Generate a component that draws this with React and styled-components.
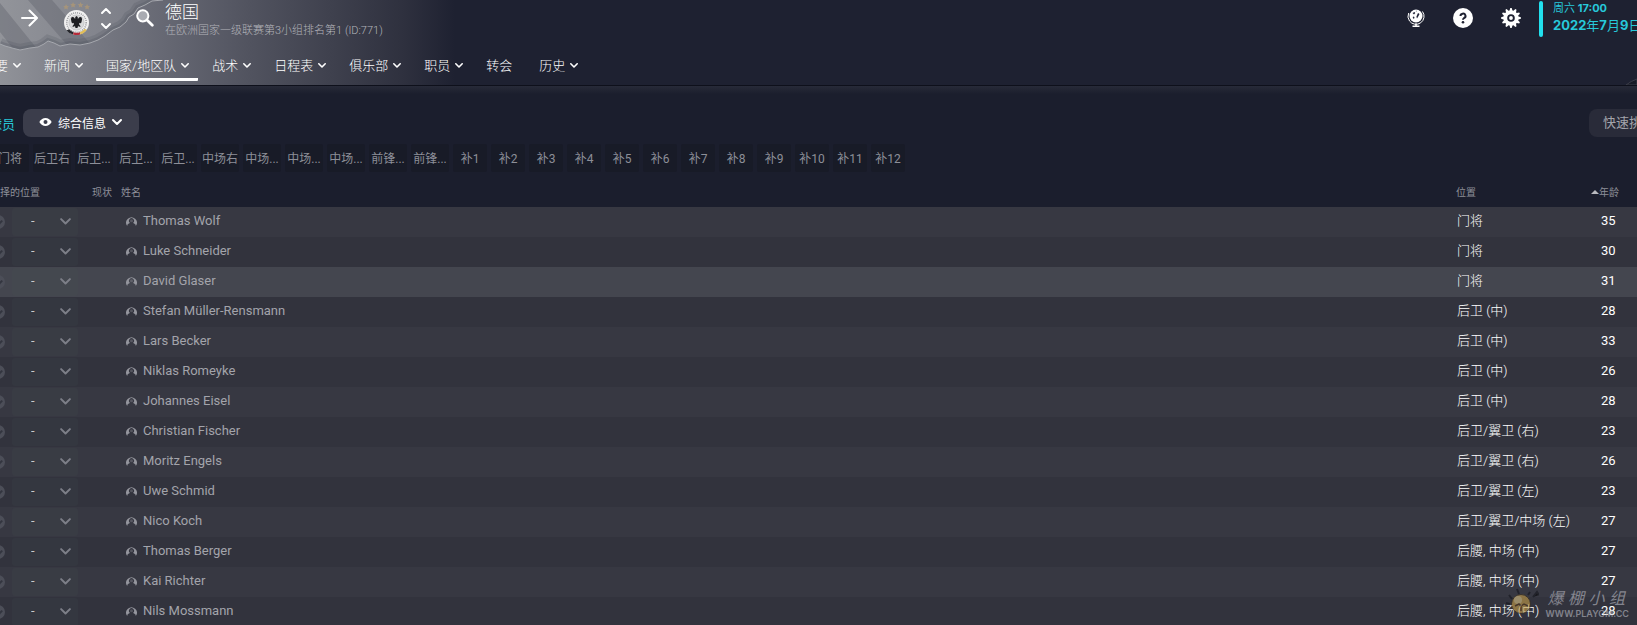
import React, { Component } from 'react'
import styled, { createGlobalStyle } from 'styled-components'

const colors = {
  page: '#1b1e2d',
  header: '#1e2131',
  accent: '#27c8da',
  accentBright: '#22e0ee',
  white: '#fff',
  muted: '#a3a4ab',
  dim: '#8d8f98',
  button: '#3b3d4b',
  rowOdd: '#373842',
  rowEven: '#32333d',
  rowActive: '#44464f'
}

const navItems = [
  { label: '概要', menu: true },
  { label: '新闻', menu: true },
  { label: '国家/地区队', menu: true, active: true },
  { label: '战术', menu: true },
  { label: '日程表', menu: true },
  { label: '俱乐部', menu: true },
  { label: '职员', menu: true },
  { label: '转会' },
  { label: '历史', menu: true }
]

const slots = [
  '门将',
  '后卫右',
  '后卫...',
  '后卫...',
  '后卫...',
  '中场右',
  '中场...',
  '中场...',
  '中场...',
  '前锋...',
  '前锋...'
]

const subs = ['1', '2', '3', '4', '5', '6', '7', '8', '9', '10', '11', '12']

const players = [
  { name: 'Thomas Wolf', position: '门将', age: 35 },
  { name: 'Luke Schneider', position: '门将', age: 30 },
  { name: 'David Glaser', position: '门将', age: 31, active: true },
  { name: 'Stefan Müller-Rensmann', position: '后卫 (中)', age: 28 },
  { name: 'Lars Becker', position: '后卫 (中)', age: 33 },
  { name: 'Niklas Romeyke', position: '后卫 (中)', age: 26 },
  { name: 'Johannes Eisel', position: '后卫 (中)', age: 28 },
  { name: 'Christian Fischer', position: '后卫/翼卫 (右)', age: 23 },
  { name: 'Moritz Engels', position: '后卫/翼卫 (右)', age: 26 },
  { name: 'Uwe Schmid', position: '后卫/翼卫 (左)', age: 23 },
  { name: 'Nico Koch', position: '后卫/翼卫/中场 (左)', age: 27 },
  { name: 'Thomas Berger', position: '后腰, 中场 (中)', age: 27 },
  { name: 'Kai Richter', position: '后腰, 中场 (中)', age: 27 },
  { name: 'Nils Mossmann', position: '后腰, 中场 (中)', age: 28 }
]

const GlobalStyle = createGlobalStyle`
  * { box-sizing: border-box; }
  body {
    margin: 0;
    background: ${colors.page};
    color: ${colors.white};
    font-family: Roboto, 'Noto Sans CJK SC', sans-serif;
    font-size: 13px;
  }
  button, select, input { font: inherit; color: inherit; }
  svg { display: block; flex: none; }
`

const Page = styled.div`
  position: relative;
  height: 100vh;
  overflow: hidden;
`
const HeaderBar = styled.header`
  position: relative;
  isolation: isolate;
  border-bottom: 1px solid #0e101b;
  background: linear-gradient(
    90deg,
    #919399 0,
    #7f818a 60px,
    #666873 165px,
    #51535f 250px,
    #3f414e 330px,
    #2e303e 405px,
    ${colors.header} 455px
  );
`
const Torn = styled.svg`
  position: absolute;
  top: 0;
  left: 0;
  z-index: -1;
`
const Corner = styled.svg`
  position: absolute;
  right: 0;
  bottom: 0;
`
const TopRow = styled.div`
  display: flex;
  align-items: center;
  height: 36px;
  margin-bottom: 14px;
  padding-left: 20px;
`
const IconButton = styled.button`
  display: flex;
  flex-direction: column;
  align-items: center;
  gap: ${props => props.$gap || 0}px;
  width: ${props => props.$width}px;
  margin: 0;
  padding: 0;
  border: 0;
  background: none;
  cursor: pointer;
`
const CrestLink = styled.a`
  margin: 0 10px 0 25px;
`
const SearchButton = styled(IconButton)`
  margin: 0 11px 0 24px;
`
const Heading = styled.div`
  align-self: flex-start;
  flex: 1;
  padding-top: 1px;
  font-weight: 300;
  white-space: nowrap;
`
const Title = styled.h1`
  margin: 0;
  font-size: 17px;
  font-weight: 300;
  line-height: 22px;
`
const Subtitle = styled.p`
  margin: 0;
  color: #b2b3b9;
  font-size: 11px;
  line-height: 16px;
`
const Tools = styled.div`
  display: flex;
  gap: 28px;
  margin-right: 18px;
`
const Clock = styled.div`
  align-self: flex-start;
  flex: none;
  width: 98px;
  margin-top: 1px;
  padding-left: 14px;
  overflow: hidden;
  position: relative;
  color: ${colors.accent};
  white-space: nowrap;
  &::before {
    content: '';
    position: absolute;
    inset: 0 auto 0 0;
    width: 4px;
    border-radius: 2px;
    background: ${colors.accentBright};
  }
  b {
    font-family: Inter, sans-serif;
    font-weight: 700;
  }
`
const Time = styled.div`
  font-size: 11px;
  line-height: 14px;
`
const Today = styled.div`
  font-size: 13px;
  line-height: 18px;
  padding-bottom: 2px;
`
const Nav = styled.nav`
  display: flex;
  gap: 4px;
  height: 35px;
  margin-left: -28px;
`
const NavLink = styled.a`
  display: flex;
  align-items: center;
  gap: 5px;
  height: 31px;
  padding: 0 ${props => (props.$menu ? 9 : 13)}px 0 10px;
  border-bottom: 3px solid ${props => (props.$active ? colors.white : 'transparent')};
  border-radius: 1px;
  color: ${colors.white};
  font-weight: 300;
  text-decoration: none;
  white-space: nowrap;
  svg {
    margin-top: 3px;
  }
`
const Toolbar = styled.div`
  display: flex;
  align-items: center;
  margin-left: -12px;
  padding-top: 23px;
  background: linear-gradient(#272a38, ${colors.page} 8px);
`
const SectionLabel = styled.span`
  width: 35px;
  padding-left: 1px;
  color: ${colors.accent};
`
const ViewButton = styled.button`
  display: flex;
  align-items: center;
  gap: 6px;
  height: 28px;
  padding: 0 17px 2px 16px;
  border: 0;
  border-radius: 8px;
  background: ${colors.button};
  font-size: 12px;
`
const QuickPick = styled.button`
  width: 48px;
  height: 28px;
  margin-left: auto;
  padding: 0 0 4px 14px;
  overflow: hidden;
  border: 0;
  border-radius: 8px 0 0 8px;
  background: #292b39;
  color: ${colors.muted};
  text-align: left;
  white-space: nowrap;
`
const Slots = styled.div`
  display: flex;
  gap: 4px;
  margin: 7px 0 0 -9px;
`
const Slot = styled.button`
  width: ${props => (props.$small ? 34 : 38)}px;
  height: 28px;
  padding: 0 0 2px;
  border: 0;
  border-radius: 2px;
  background: #181b27;
  color: ${colors.dim};
  font-size: 12px;
  white-space: nowrap;
`
const Table = styled.table`
  width: 100%;
  border-collapse: collapse;
  table-layout: fixed;
  white-space: nowrap;
`
const HeadCell = styled.th`
  width: ${props => (props.$width ? props.$width + 'px' : 'auto')};
  height: 35px;
  padding: 3px 0 0 ${props => props.$indent || 0}px;
  color: ${colors.dim};
  font-size: 10px;
  font-weight: 400;
  text-align: left;
`
const SelectionHead = styled.span`
  display: block;
  margin-left: -10px;
`
const SortMark = styled.span`
  display: inline-block;
  border: solid transparent;
  border-width: 0 4px 4px;
  border-bottom-color: #b9bac0;
  vertical-align: 2px;
`
const background = ({ $active, $odd }) => {
  if ($active) return colors.rowActive
  return $odd ? colors.rowOdd : colors.rowEven
}
const Row = styled.tr`
  height: 30px;
  background: ${background};
`
const Cell = styled.td`
  padding: 0 0 2px ${props => props.$indent || 0}px;
  line-height: 20px;
`
const PositionCell = styled(Cell)`
  padding-bottom: 3px;
  font-weight: 300;
`
const PickerCell = styled.td`
  padding: 0;
`
const Picker = styled.div`
  display: flex;
  align-items: center;
  gap: 7px;
  margin-left: -9px;
`
const Tick = styled.input`
  display: grid;
  place-items: center;
  appearance: none;
  width: 14px;
  height: 14px;
  margin: 0;
  border-radius: 50%;
  background: #4c4e58;
  &::after {
    content: '';
    width: 6px;
    height: 4px;
    border: solid #33353f;
    border-width: 0 0 2px 2px;
    transform: rotate(-45deg);
  }
`
const SelectBox = styled.div`
  display: grid;
  align-items: center;
  width: 66px;
  height: 28px;
  border-radius: 3px;
  background: rgba(70, 84, 84, 0.14);
  color: #7d7f88;
  > * {
    grid-area: 1 / 1;
  }
  svg {
    justify-self: end;
    margin: 0 7px 1px 0;
    pointer-events: none;
  }
`
const PositionSelect = styled.select`
  appearance: none;
  width: 100%;
  height: 28px;
  padding: 0 0 3px 19px;
  border: 0;
  background: none;
  color: #c8c9cd;
`
const Player = styled.a`
  display: flex;
  align-items: center;
  gap: 6px;
  color: ${colors.muted};
  text-decoration: none;
`
const Watermark = styled.div`
  position: absolute;
  right: 8px;
  bottom: 6px;
  display: flex;
  align-items: center;
  gap: 6px;
  opacity: 0.6;
  pointer-events: none;
`
const WatermarkText = styled.div`
  color: #b9bac2;
  font-size: 9px;
  font-family: Inter, 'Noto Sans CJK SC', sans-serif;
  font-weight: 600;
  line-height: 10px;
`
const WatermarkName = styled.div`
  display: flex;
  justify-content: space-between;
  padding: 0 4px 0 2px;
  font-size: 16px;
  font-style: italic;
  font-weight: 400;
  line-height: 22px;
`

const Chevron = ({ size = 8, weight = 1.6, up }) => (
  <svg width={size} height={size * 0.6} viewBox="0 0 10 6" fill="none" stroke="currentColor" strokeWidth={weight * 10 / size} strokeLinecap="round" strokeLinejoin="round" overflow="visible">
    <path d={up ? 'M1 5l4-4 4 4' : 'M1 1l4 4 4-4'} />
  </svg>
)

const ArrowIcon = () => (
  <svg width="18" height="18" viewBox="0 0 18 18" fill="none" stroke="#fff" strokeWidth="2" strokeLinecap="round" strokeLinejoin="round">
    <path d="M2 9h14.500M9.500 1.500l7.500 7.500-7.500 7.500" />
  </svg>
)

const SearchIcon = () => (
  <svg width="18" height="18" viewBox="0 0 18 18" fill="none" stroke="#fff" strokeLinecap="round">
    <circle cx="6.800" cy="6.800" r="5.600" fill="#a9abb2" strokeWidth="2" />
    <path d="M11.500 11.500l4.800 4.800" strokeWidth="2.800" />
  </svg>
)

const Crest = () => (
  <svg width="27" height="36" viewBox="0 0 27 36">
    <g fill="#b49a72" opacity=".7">
      <path d="M3 4l1 2 2 .3-1.500 1.300.4 2L3 8.600 1.200 9.600l.4-2L.2 6.300l2-.3z" />
      <path d="M10 2l1 2 2 .3-1.500 1.300.4 2L10 6.600 8.200 7.600l.4-2L7.200 4.300l2-.3z" />
      <path d="M17.500 2l1 2 2 .3L19 5.600l.4 2-1.900-1-1.800 1 .4-2-1.400-1.300 2-.3z" />
      <path d="M24 4l1 2 2 .3-1.500 1.300.4 2L24 8.600l-1.800 1 .4-2-1.400-1.300 2-.3z" />
    </g>
    <circle cx="13.500" cy="22.500" r="12.500" fill="#f1f1f1" />
    <circle cx="13.500" cy="22.500" r="9.700" fill="none" stroke="#9c9da1" strokeWidth="1.500" strokeDasharray="1 1" />
    <circle cx="13.500" cy="22.500" r="7.600" fill="#d9dadb" stroke="#b4b5b8" strokeWidth=".6" />
    <path d="M3.500 30.500a12.500 12.500 0 0 0 6.500 4l.6-2.300a10 10 0 0 1-4.600-3z" fill="#26272c" />
    <path d="M10 34.500a12.500 12.500 0 0 0 7.500 0l-.6-2.300a10 10 0 0 1-6.300 0z" fill="#b72c3a" />
    <path d="M17.500 34.500a12.500 12.500 0 0 0 6.300-4.500l-2.100-1.300a10 10 0 0 1-4.800 3.500z" fill="#e0bd57" />
    <path d="M13.500 16l1.200 1 .2 2 1.300-1.700 2-.3.900 2-.7 3.500-1.400 1-1-.8.200 1.800 1.600 2-1.900.2-.8-.9-.6 2.200h-2l-.6-2.200-.8.900-1.900-.2 1.600-2 .2-1.800-1 .8-1.400-1-.7-3.500.9-2 2 .3 1.300 1.700.2-2z" fill="#1d1e22" />
  </svg>
)

const GlobeIcon = () => (
  <svg width="20" height="20" viewBox="0 0 20 20">
    <circle cx="11" cy="8" r="6.500" fill="#fff" />
    <path d="M7.500 5l2-1 .8 1-1.300 1.500zM8 8.500l1.500.5-.5 2-1.200-1zM13 5l1.500 1-1 2-1.500 2.500-.6-1.800.6-1.500zM10.500 3l1.300-.3.300.8z" fill="#23263a" />
    <path d="M17.500 3.500a8 8 0 0 1-13 9.500M3.700 5a8 8 0 0 0 .8 8" fill="none" stroke="#fff" />
    <path d="M11 15.500v2M7.500 18.200h7" stroke="#fff" strokeWidth="1.600" />
  </svg>
)

const HelpIcon = () => (
  <svg width="20" height="20" viewBox="0 0 20 20" fill="none">
    <circle cx="10" cy="10" r="10" fill="#fff" />
    <path d="M7.500 8a2.500 2.300 0 1 1 3.600 2c-.8.500-1.100.8-1.100 1.700" stroke="#1e2131" strokeWidth="2" />
    <circle cx="10" cy="14.200" r="1.300" fill="#1e2131" />
  </svg>
)

// twelve teeth: each one is two outer and two inner points
const gearPoints = Array.from({ length: 48 }, (_, i) => {
  const tooth = i % 4
  const radius = tooth < 2 ? 10.4 : 8
  const angle = (Math.floor(i / 4) * 30 + [-4, 4, 11, 19][tooth] - 90) * Math.PI / 180
  return `${(10 + radius * Math.cos(angle)).toFixed(2)},${(10 + radius * Math.sin(angle)).toFixed(2)}`
}).join(' ')

const GearIcon = () => (
  <svg width="20" height="20" viewBox="-0.500 -0.500 21 21">
    <polygon points={gearPoints} fill="#fff" />
    <circle cx="10" cy="10" r="3" fill="#fff" stroke="#1e2131" strokeWidth="2" />
  </svg>
)

const EyeIcon = () => (
  <svg width="13" height="10" viewBox="0 0 13 10">
    <path d="M.3 5C2 2.200 4 1 6.500 1s4.500 1.200 6.200 4C11 7.800 9 9 6.500 9S2 7.800.3 5z" fill="#fff" />
    <circle cx="6.500" cy="5" r="2" fill="#3b3d4b" />
  </svg>
)

const PersonIcon = () => (
  <svg width="11" height="11" viewBox="0 0 11 11">
    <path d="M1.300 10A5.300 5.300 0 1 1 9.700 10L9.600 8.800C9 7.800 8 7.400 7 7A2.500 2.700 0 1 0 4 7C3 7.400 2 7.800 1.400 8.800z" fill="#94959d" />
    <circle cx="5.500" cy="4.800" r="1.500" fill="#94959d" opacity=".35" />
  </svg>
)

const edge = '163 0L152 1 145 5 138 8 134 14 129 17 126 22 120 27 113 30 105 36 98 40 90 43 80 45 70 44 60 46 54 43 48 41 44 44 38 47 30 48 20 50 12 48 5 46 0 44'

const TornPaper = () => (
  <Torn width="170" height="54" viewBox="0 0 170 54" fill="none" aria-hidden="true">
    <defs>
      <clipPath id="torn">
        <path d={`M0 0L${edge}z`} />
      </clipPath>
      <linearGradient id="sheet">
        <stop offset="0" stopColor="#92949a" />
        <stop offset="1" stopColor="#777983" />
      </linearGradient>
    </defs>
    <g clipPath="url(#torn)">
      <path d="M0 0H170V54H0z" fill="url(#sheet)" />
      <path d="M0 3L38 50H14L0 32zM28 0H52L92 46H68z" fill="#5f616c" opacity=".4" />
      <path d={`M${edge}`} stroke="#4d4f5b" strokeWidth="12" opacity=".2" />
      <path d={`M${edge}`} stroke="#4d4f5b" strokeWidth="6" opacity=".25" />
    </g>
    <path d={`M${edge}`} stroke="#a6a8ae" />
  </Torn>
)

const Header = () => (
  <HeaderBar>
    <TornPaper />
    <TopRow>
      <IconButton $width={18} aria-label="前进"><ArrowIcon /></IconButton>
      <CrestLink href="#team" aria-label="德国"><Crest /></CrestLink>
      <IconButton $width={12} $gap={9} aria-label="切换球队">
        <Chevron size={10} weight={2} up />
        <Chevron size={10} weight={2} />
      </IconButton>
      <SearchButton $width={18} aria-label="搜索"><SearchIcon /></SearchButton>
      <Heading>
        <Title>德国</Title>
        <Subtitle>在欧洲国家一级联赛第3小组排名第1 (ID:771)</Subtitle>
      </Heading>
      <Tools>
        <IconButton $width={20} aria-label="世界"><GlobeIcon /></IconButton>
        <IconButton $width={20} aria-label="帮助"><HelpIcon /></IconButton>
        <IconButton $width={20} aria-label="设置"><GearIcon /></IconButton>
      </Tools>
      <Clock>
        <Time>周六 <b>17:00</b></Time>
        <Today><b>2022</b>年<b>7</b>月<b>9</b>日</Today>
      </Clock>
    </TopRow>
    <Nav>
      {navItems.map(({ label, menu, active }) => (
        <NavLink key={label} href="#nav" $menu={menu} $active={active}>
          {label}
          {menu && <Chevron />}
        </NavLink>
      ))}
    </Nav>
    <Corner width="12" height="7" viewBox="0 0 12 7" aria-hidden="true">
      <path d="M1 7Q6 3 12 1V7z" fill="#171a26" stroke="#3a3c48" />
    </Corner>
  </HeaderBar>
)

class PlayerRow extends Component {
  state = { checked: false, slot: '-' }
  render() {
    const { player, odd } = this.props
    return (
      <Row $odd={odd} $active={player.active}>
        <PickerCell>
          <Picker>
            <Tick
              type="checkbox"
              aria-label={`选择 ${player.name}`}
              checked={this.state.checked}
              onChange={this._toggle}
            />
            <SelectBox>
              <PositionSelect
                aria-label={`${player.name} 的位置`}
                value={this.state.slot}
                onChange={this._changeSlot}
              >
                <option>-</option>
                {subs.map(n => <option key={n}>{`补${n}`}</option>)}
              </PositionSelect>
              <Chevron size={11} weight={2} />
            </SelectBox>
          </Picker>
        </PickerCell>
        <Cell />
        <Cell $indent={9}>
          <Player href="#player">
            <PersonIcon />
            {player.name}
          </Player>
        </Cell>
        <PositionCell $indent={1}>{player.position}</PositionCell>
        <Cell $indent={10}>{player.age}</Cell>
      </Row>
    )
  }
  _toggle = () => {
    this.setState({ checked: !this.state.checked })
  }
  _changeSlot = event => {
    this.setState({ slot: event.target.value })
  }
}

const App = () => (
  <Page>
    <GlobalStyle />
    <Header />
    <Toolbar>
      <SectionLabel>球员</SectionLabel>
      <ViewButton>
        <EyeIcon />
        综合信息
        <Chevron size={10} weight={2} />
      </ViewButton>
      <QuickPick>快速挑选</QuickPick>
    </Toolbar>
    <Slots>
      {slots.map((slot, i) => <Slot key={i}>{slot}</Slot>)}
      {subs.map(n => <Slot key={n} $small>{`补${n}`}</Slot>)}
    </Slots>
    <Table>
      <thead>
        <tr>
          <HeadCell $width={92}><SelectionHead>选择的位置</SelectionHead></HeadCell>
          <HeadCell $width={25}>现状</HeadCell>
          <HeadCell $indent={4}>姓名</HeadCell>
          <HeadCell $width={135}>位置</HeadCell>
          <HeadCell $width={46}><SortMark />年龄</HeadCell>
        </tr>
      </thead>
      <tbody>
        {players.map((player, i) => (
          <PlayerRow key={player.name} player={player} odd={i % 2 === 0} />
        ))}
      </tbody>
    </Table>
    <Watermark>
      <svg width="36" height="32" viewBox="0 0 36 32">
        <path d="M6 8l3 4M14 2l2 5M30 10l4-5 2 3M27 5l-2 3M3 16l4 1" stroke="#15161d" strokeWidth="2" />
        <circle cx="18" cy="17" r="9.500" fill="#c9a04a" stroke="#3a3020" />
        <circle cx="15" cy="13" r="4" fill="#ead9a4" opacity=".7" />
        <path d="M12 19l4-2 2 2 3-2 4 2M18 19v5" stroke="#54391c" strokeWidth="1.500" fill="none" />
      </svg>
      <WatermarkText>
        <WatermarkName><span>爆</span><span>棚</span><span>小</span><span>组</span></WatermarkName>
        WWW.PLAYGM.CC
      </WatermarkText>
    </Watermark>
  </Page>
)

export default App
